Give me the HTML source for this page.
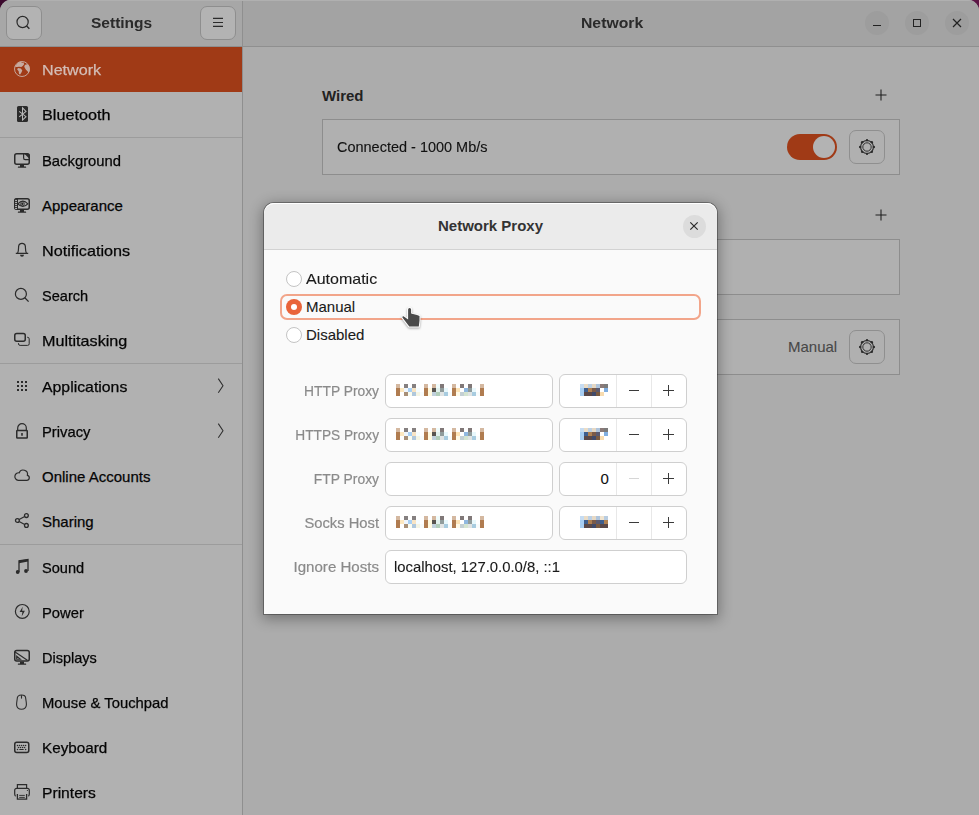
<!DOCTYPE html>
<html><head><meta charset="utf-8">
<style>
*{box-sizing:border-box;margin:0;padding:0}
html,body{width:979px;height:815px;overflow:hidden;background:linear-gradient(90deg,#3c0a2e,#5c1646)}
body{font-family:"Liberation Sans",sans-serif;font-size:15px;color:#111;position:relative}
.abs{position:absolute}
.ic{position:absolute;overflow:visible}
#win{position:absolute;left:0;top:0;width:979px;height:815px;border-radius:11px 11px 0 0;overflow:hidden;background:#ababab}
#hdrL{left:0;top:0;width:242px;height:46px;background:#a7a7a7}
#hdrR{left:243px;top:0;width:736px;height:46px;background:#a3a3a3}
#hline{left:0;top:46px;width:979px;height:1px;background:#8f8f8f}
#vline{left:242px;top:0;width:1px;height:815px;background:#8f8f8f}
#side{left:0;top:47px;width:242px;height:768px;background:#b1b1b1}
.hbtn{position:absolute;width:36px;height:34px;border-radius:7px;background:#b3b3b3;border:1px solid #8e8e8e}
.title{position:absolute;font-weight:700;font-size:15px;color:#2a2a2a;white-space:nowrap}
.item{position:absolute;left:0;width:242px;height:45px}
.item .t{position:absolute;left:42px;top:14px;white-space:nowrap;font-size:15px;color:#050505;-webkit-text-stroke:0.25px currentColor;transform-origin:0 50%}
.sep{position:absolute;left:0;width:242px;height:1px;background:#9c9c9c}
.wc{position:absolute;width:24px;height:24px;border-radius:50%;background:#9d9d9d}
#content{left:243px;top:47px;width:736px;height:768px;background:#acacac}
.box{position:absolute;border:1px solid #8d8d8d;background:#b0b0b0}
.gear{position:absolute;width:36px;height:34px;border:1px solid #8f8f8f;border-radius:7px;background:#b0b0b0}
#dlg{left:264px;top:203px;width:453px;height:411px;border-radius:10px 10px 0 0;background:#fafafa;box-shadow:0 0 0 1px rgba(0,0,0,.3),0 3px 14px 2px rgba(0,0,0,.33)}
#dhdr{left:264px;top:203px;width:453px;height:47px;background:#ebebeb;border-bottom:1px solid #d2d2d2;border-radius:10px 10px 0 0;box-shadow:inset 0 1px #fff}
.radio{position:absolute;width:16px;height:16px;border-radius:50%;border:1px solid #c4c4c4;background:#fff}
.lbl{position:absolute;left:279px;width:100px;white-space:nowrap;color:#8a8a8a;-webkit-text-stroke:0.2px currentColor;font-size:15px;text-align:right;transform-origin:100% 50%}
.txt{white-space:nowrap;color:#1a1a1a;-webkit-text-stroke:0.12px currentColor}
.entry{position:absolute;height:34px;border:1px solid #cfcfcf;border-radius:6px;background:#fff}
.spin{position:absolute;height:34px;border:1px solid #cfcfcf;border-radius:6px;background:#fff}
.pix i{position:absolute;width:4px;height:4px;display:block}
</style></head><body>
<div id="win">
  <div class="abs" id="hdrL"></div>
  <div class="abs" id="hdrR"></div>
  <div class="abs" id="side"></div>
  <div class="abs" id="content"></div>
  <div class="abs" id="hline"></div>
  <div class="abs" id="vline"></div>
  <div class="abs" style="left:0;top:0;width:979px;height:1px;background:#b0b0b0"></div>

  <!-- header left -->
  <div class="hbtn" style="left:6px;top:6px"></div>
  <svg class="ic" style="left:15px;top:15px" width="16" height="16" viewBox="0 0 16 16"><circle cx="7.6" cy="7" r="5.6" fill="none" stroke="#2b2b2b" stroke-width="1.2"/><path d="M11.6 11 L14.4 13.8" stroke="#2b2b2b" stroke-width="1.4"/></svg>
  <div class="title" style="left:91px;top:14px;transform:scaleX(1.034);transform-origin:0 50%">Settings</div>
  <div class="hbtn" style="left:200px;top:6px"></div>
  <svg class="ic" style="left:210px;top:14px" width="16" height="16" viewBox="0 0 16 16"><path d="M3 4.4 H13 M3 8.5 H13 M3 12.4 H13" stroke="#2b2b2b" stroke-width="1.2"/></svg>
  <div class="title" style="left:581px;top:14px;transform:scaleX(1.05);transform-origin:0 50%">Network</div>
  <div class="wc" style="left:865px;top:11px"></div>
  <div class="wc" style="left:905px;top:11px"></div>
  <div class="wc" style="left:945px;top:11px"></div>
  <div class="abs" style="left:873px;top:25px;width:8px;height:1.2px;background:#222"></div>
  <div class="abs" style="left:913px;top:19px;width:8px;height:8px;border:1.2px solid #222"></div>
  <svg class="ic" style="left:953px;top:19px" width="8" height="8" viewBox="0 0 8 8"><path d="M0 0 L8 8 M8 0 L0 8" stroke="#222" stroke-width="1.2"/></svg>

  <!-- sidebar -->
<div class="item" style="top:47px;background:#a03a16;"><svg class="ic" style="left:14px;top:14px" width="16" height="16" viewBox="0 0 16 16" ><circle cx="8" cy="8" r="7.5" fill="none" stroke="#c7aa9f" stroke-width="0.95"/><path d="M1 6.1 L3.2 2.5 L6.5 0.6 L8 1.7 L9.5 1.4 L10.2 3.2 L8.7 5 L7.3 6.1 L5 5.8 L3.2 6.1 Z" fill="#c7aa9f"/><path d="M3.9 6.9 L6.9 7.6 L8.3 9.5 L7.3 11.7 L6.1 13.5 L5 13.1 L4.7 10.2 L3.2 8.4 Z" fill="#c7aa9f"/><path d="M10.2 5 L11.7 3.6 L13.5 3.2 L15.3 5.8 L15.7 9.5 L14.6 11.7 L13.5 10.2 L12 8.7 L10.6 6.5 Z" fill="#c7aa9f"/></svg><span class="t" style="color:#d3bdb6;transform:scaleX(1.074)">Network</span></div>
<div class="item" style="top:92px;"><svg class="ic" style="left:14px;top:14px" width="16" height="16" viewBox="0 0 16 16" ><rect x="3" y="0" width="11" height="16" rx="1.6" fill="#2b2b2b"/><path d="M5.2 5.3 L12 10.7 L8.5 14.1 V1.9 L12 5.5 L5.2 10.8" fill="none" stroke="#b8b8b8" stroke-width="1.05" stroke-linejoin="miter"/></svg><span class="t" style="transform:scaleX(1.08)">Bluetooth</span></div>
<div class="item" style="top:138px;"><svg class="ic" style="left:14px;top:14px" width="16" height="16" viewBox="0 0 16 16" ><rect x="0.75" y="1.75" width="14.5" height="10.5" rx="2" fill="none" stroke="#2b2b2b" stroke-width="1.5"/><path d="M9.6 1.8 V6 A1.6 1.6 0 0 0 11.2 7.6 H15.2" fill="none" stroke="#2b2b2b" stroke-width="1.2"/><path d="M10.2 1.4 H13.6 A2 2 0 0 1 15.6 3.4 V7 Z" fill="#2b2b2b"/><rect x="6" y="12.5" width="4" height="2.5" fill="#2b2b2b"/><rect x="3.8" y="14.6" width="8.4" height="1.2" rx="0.6" fill="#2b2b2b"/></svg><span class="t" style="transform:scaleX(0.987)">Background</span></div>
<div class="item" style="top:183px;"><svg class="ic" style="left:14px;top:14px" width="16" height="16" viewBox="0 0 16 16" ><rect x="0.75" y="1.75" width="14.5" height="10.5" rx="2" fill="none" stroke="#2b2b2b" stroke-width="1.5"/><rect x="0.5" y="1.5" width="3.5" height="11" rx="1" fill="#2b2b2b"/><rect x="1.1" y="2.9" width="1.9" height="1.15" fill="#b3b3b3"/><rect x="1.1" y="4.9" width="1.9" height="1.15" fill="#b3b3b3"/><rect x="1.1" y="6.9" width="1.9" height="1.15" fill="#b3b3b3"/><rect x="1.1" y="8.9" width="1.9" height="1.15" fill="#b3b3b3"/><rect x="1.1" y="10.9" width="1.9" height="1.15" fill="#b3b3b3"/><path d="M3.9 6.8 Q8.8 1.6 13.8 6.8 Q8.8 12 3.9 6.8 Z" fill="none" stroke="#2b2b2b" stroke-width="1.2"/><circle cx="8.4" cy="6.8" r="2.1" fill="none" stroke="#2b2b2b" stroke-width="0.7"/><circle cx="8.4" cy="6.8" r="1.2" fill="#2b2b2b"/><rect x="6" y="12.5" width="4" height="2.5" fill="#2b2b2b"/><rect x="3.8" y="14.6" width="8.4" height="1.2" rx="0.6" fill="#2b2b2b"/></svg><span class="t" style="transform:scaleX(1.0)">Appearance</span></div>
<div class="item" style="top:228px;"><svg class="ic" style="left:14px;top:14px" width="16" height="16" viewBox="0 0 16 16" ><path d="M3.6 11.2 C4.6 9.6 4.5 7 4.6 4.6 C4.8 2.4 6.2 1.4 8 1.4 C9.8 1.4 11.2 2.4 11.4 4.6 C11.5 7 11.4 9.6 12.4 11.2" fill="none" stroke="#2b2b2b" stroke-width="1.2"/><path d="M1.8 11.4 H14.2" fill="none" stroke="#2b2b2b" stroke-width="1.4"/><path d="M6 12.8 H10 A2 2 0 0 1 6 12.8 Z" fill="#2b2b2b"/></svg><span class="t" style="transform:scaleX(1.078)">Notifications</span></div>
<div class="item" style="top:273px;"><svg class="ic" style="left:14px;top:14px" width="16" height="16" viewBox="0 0 16 16" ><circle cx="6.9" cy="6.9" r="5.5" fill="none" stroke="#2b2b2b" stroke-width="1.2"/><path d="M10.8 10.8 L14.6 14.6" fill="none" stroke="#2b2b2b" stroke-width="1.3"/></svg><span class="t" style="transform:scaleX(0.97)">Search</span></div>
<div class="item" style="top:318px;"><svg class="ic" style="left:14px;top:14px" width="16" height="16" viewBox="0 0 16 16" ><rect x="0.75" y="1.5" width="10.5" height="7.8" rx="2" fill="none" stroke="#2b2b2b" stroke-width="1.5"/><path d="M13 5.3 H13.6 A1.6 1.6 0 0 1 15.2 6.9 V11.8 A1.6 1.6 0 0 1 13.6 13.4 H6.1 A1.6 1.6 0 0 1 4.5 11.8 V11" fill="none" stroke="#2b2b2b" stroke-width="1"/></svg><span class="t" style="transform:scaleX(1.077)">Multitasking</span></div>
<div class="item" style="top:364px;"><svg class="ic" style="left:14px;top:14px" width="16" height="16" viewBox="0 0 16 16" ><rect x="3" y="3" width="2" height="2" fill="#2b2b2b"/><rect x="3" y="7" width="2" height="2" fill="#2b2b2b"/><rect x="3" y="11" width="2" height="2" fill="#2b2b2b"/><rect x="7" y="3" width="2" height="2" fill="#2b2b2b"/><rect x="7" y="7" width="2" height="2" fill="#2b2b2b"/><rect x="7" y="11" width="2" height="2" fill="#2b2b2b"/><rect x="11" y="3" width="2" height="2" fill="#2b2b2b"/><rect x="11" y="7" width="2" height="2" fill="#2b2b2b"/><rect x="11" y="11" width="2" height="2" fill="#2b2b2b"/></svg><span class="t" style="transform:scaleX(1.055)">Applications</span><svg class="ic" style="left:214px;top:14px" width="12" height="16" viewBox="0 0 12 16"><path d="M4.3 0.6 L9 7.7 L4.3 14.8" fill="none" stroke="#2e2e2e" stroke-width="1.05"/></svg></div>
<div class="item" style="top:409px;"><svg class="ic" style="left:14px;top:14px" width="16" height="16" viewBox="0 0 16 16" ><path d="M3.7 7.2 V5 A4.3 4.3 0 0 1 12.3 5 V7.2" fill="none" stroke="#2b2b2b" stroke-width="1.2"/><rect x="2.75" y="7.6" width="10.5" height="7.4" rx="0.6" fill="none" stroke="#2b2b2b" stroke-width="1.5"/><rect x="7.2" y="10" width="1.6" height="2.8" rx="0.5" fill="#2b2b2b"/></svg><span class="t" style="transform:scaleX(0.986)">Privacy</span><svg class="ic" style="left:214px;top:14px" width="12" height="16" viewBox="0 0 12 16"><path d="M4.3 0.6 L9 7.7 L4.3 14.8" fill="none" stroke="#2e2e2e" stroke-width="1.05"/></svg></div>
<div class="item" style="top:454px;"><svg class="ic" style="left:14px;top:14px" width="16" height="16" viewBox="0 0 16 16" ><path d="M4.2 12.4 H12.6 A2.6 2.6 0 0 0 13.4 7.3 A4.3 4.3 0 0 0 5.2 4.8 A3.7 3.7 0 0 0 4.2 12.4 Z" fill="none" stroke="#2b2b2b" stroke-width="1.2"/></svg><span class="t" style="transform:scaleX(1.0)">Online Accounts</span></div>
<div class="item" style="top:499px;"><svg class="ic" style="left:14px;top:14px" width="16" height="16" viewBox="0 0 16 16" ><circle cx="3.4" cy="7.5" r="1.9" fill="none" stroke="#2b2b2b" stroke-width="1.3"/><circle cx="12.4" cy="2.6" r="1.9" fill="none" stroke="#2b2b2b" stroke-width="1.3"/><circle cx="12.4" cy="12.4" r="1.9" fill="none" stroke="#2b2b2b" stroke-width="1.3"/><path d="M5.1 6.5 L10.7 3.5 M5.1 8.5 L10.7 11.5" fill="none" stroke="#2b2b2b" stroke-width="1.2"/></svg><span class="t" style="transform:scaleX(1.0)">Sharing</span></div>
<div class="item" style="top:545px;"><svg class="ic" style="left:14px;top:14px" width="16" height="16" viewBox="0 0 16 16" ><path d="M5 13 V1.8 L14 0.4 V12" fill="none" stroke="#2b2b2b" stroke-width="1.3"/><path d="M5 1.6 L14 0.2 V2.6 L5 4.2 Z" fill="#2b2b2b"/><circle cx="3.7" cy="13" r="1.9" fill="#2b2b2b"/><circle cx="12" cy="12" r="1.9" fill="#2b2b2b"/></svg><span class="t" style="transform:scaleX(0.974)">Sound</span></div>
<div class="item" style="top:590px;"><svg class="ic" style="left:14px;top:14px" width="16" height="16" viewBox="0 0 16 16" ><circle cx="8.3" cy="7.4" r="6.9" fill="none" stroke="#2b2b2b" stroke-width="1.2"/><path d="M8.7 2.8 L5.6 8 H8.4 L7.7 12.4 L10.9 6.8 H8.1 Z" fill="#2b2b2b"/></svg><span class="t" style="transform:scaleX(0.986)">Power</span></div>
<div class="item" style="top:635px;"><svg class="ic" style="left:14px;top:14px" width="16" height="16" viewBox="0 0 16 16" ><rect x="0.75" y="1.5" width="14.5" height="10.6" rx="2" fill="none" stroke="#2b2b2b" stroke-width="1.5"/><path d="M0.7 2.8 L13.4 11.2" fill="none" stroke="#2b2b2b" stroke-width="1.1"/><path d="M2.7 7.2 V10.3 H6.4 Z" fill="none" stroke="#2b2b2b" stroke-width="1.1"/><rect x="6" y="12.5" width="4" height="2.5" fill="#2b2b2b"/><rect x="3.8" y="14.6" width="8.4" height="1.2" rx="0.6" fill="#2b2b2b"/></svg><span class="t" style="transform:scaleX(0.968)">Displays</span></div>
<div class="item" style="top:680px;"><svg class="ic" style="left:14px;top:14px" width="16" height="16" viewBox="0 0 16 16" ><path d="M7.5 1 C5 1 3.2 1.6 3.2 5 C3 7 2.4 9 2.6 11 C2.9 14 5 15.2 7.5 15.2 C10 15.2 12.1 14 12.4 11 C12.6 9 12 7 11.8 5 C11.8 1.6 10 1 7.5 1 Z" fill="none" stroke="#2b2b2b" stroke-width="1.1"/><path d="M7.5 1.2 V4.6" fill="none" stroke="#2b2b2b" stroke-width="1.1"/></svg><span class="t" style="transform:scaleX(0.987)">Mouse &amp; Touchpad</span></div>
<div class="item" style="top:725px;"><svg class="ic" style="left:14px;top:14px" width="16" height="16" viewBox="0 0 16 16" ><rect x="0.75" y="3.2" width="14" height="10.2" rx="2" fill="none" stroke="#2b2b2b" stroke-width="1.5"/><circle cx="3.5" cy="6.5" r="0.75" fill="#2b2b2b"/><circle cx="5.52" cy="6.5" r="0.75" fill="#2b2b2b"/><circle cx="7.54" cy="6.5" r="0.75" fill="#2b2b2b"/><circle cx="9.56" cy="6.5" r="0.75" fill="#2b2b2b"/><circle cx="11.58" cy="6.5" r="0.75" fill="#2b2b2b"/><circle cx="4.5" cy="8.5" r="0.75" fill="#2b2b2b"/><circle cx="6.52" cy="8.5" r="0.75" fill="#2b2b2b"/><circle cx="8.54" cy="8.5" r="0.75" fill="#2b2b2b"/><circle cx="10.56" cy="8.5" r="0.75" fill="#2b2b2b"/><circle cx="3.5" cy="10.5" r="0.75" fill="#2b2b2b"/><circle cx="11.6" cy="10.5" r="0.75" fill="#2b2b2b"/><rect x="5.2" y="9.9" width="4.6" height="1.2" rx="0.5" fill="#2b2b2b"/></svg><span class="t" style="transform:scaleX(1.016)">Keyboard</span></div>
<div class="item" style="top:770px;"><svg class="ic" style="left:14px;top:14px" width="16" height="16" viewBox="0 0 16 16" ><path d="M3.4 4.3 V0.6 H12.6 V4.3" fill="none" stroke="#2b2b2b" stroke-width="1.2"/><path d="M1.6 12.2 C0.8 11.6 0.7 10.8 0.7 10 V6.3 A2 2 0 0 1 2.7 4.3 H13.3 A2 2 0 0 1 15.3 6.3 V10 C15.3 10.8 15.2 11.6 14.4 12.2" fill="none" stroke="#2b2b2b" stroke-width="1.2"/><path d="M3.4 10 V15.2 H12.6 V10" fill="none" stroke="#2b2b2b" stroke-width="1.3"/><path d="M5.2 11.4 H10.8 M5.2 13.4 H10.8" fill="none" stroke="#2b2b2b" stroke-width="0.9"/><circle cx="13.4" cy="6.5" r="0.6" fill="#2b2b2b"/></svg><span class="t" style="transform:scaleX(1.043)">Printers</span></div>
<div class="sep" style="top:137px"></div>
<div class="sep" style="top:363px"></div>
<div class="sep" style="top:544px"></div>

  <!-- content -->
  <div class="title" style="left:322px;top:87px;color:#222">Wired</div>
  <svg class="ic" style="left:875px;top:89px" width="12" height="12" viewBox="0 0 12 12"><path d="M6 0.5 V11.5 M0.5 6 H11.5" stroke="#1e1e1e" stroke-width="1.05"/></svg>
  <div class="box" style="left:322px;top:119px;width:578px;height:56px"></div>
  <div class="abs txt" style="left:337px;top:138px;color:#111;transform:scaleX(0.965);transform-origin:0 50%">Connected - 1000 Mb/s</div>
  <div class="abs" style="left:787px;top:134px;width:50px;height:26px;border-radius:13px;background:#a03a16"></div>
  <div class="abs" style="left:813px;top:136px;width:22px;height:22px;border-radius:50%;background:#b3b3b3"></div>
  <div class="gear" style="left:849px;top:130px"></div>
  <svg class="ic" style="left:859px;top:139px" width="16" height="16" viewBox="0 0 16 16"><circle cx="8.00" cy="1.15" r="1.2" fill="#2b2b2b"/><circle cx="12.84" cy="3.16" r="1.2" fill="#2b2b2b"/><circle cx="14.85" cy="8.00" r="1.2" fill="#2b2b2b"/><circle cx="12.84" cy="12.84" r="1.2" fill="#2b2b2b"/><circle cx="8.00" cy="14.85" r="1.2" fill="#2b2b2b"/><circle cx="3.16" cy="12.84" r="1.2" fill="#2b2b2b"/><circle cx="1.15" cy="8.00" r="1.2" fill="#2b2b2b"/><circle cx="3.16" cy="3.16" r="1.2" fill="#2b2b2b"/><circle cx="8" cy="8" r="6.45" fill="none" stroke="#2b2b2b" stroke-width="1.1"/><circle cx="8" cy="8" r="4.2" fill="none" stroke="#2b2b2b" stroke-width="0.95"/></svg>
  <svg class="ic" style="left:875px;top:209px" width="12" height="12" viewBox="0 0 12 12"><path d="M6 0.5 V11.5 M0.5 6 H11.5" stroke="#1e1e1e" stroke-width="1.05"/></svg>
  <div class="box" style="left:322px;top:239px;width:578px;height:56px"></div>
  <div class="box" style="left:322px;top:319px;width:578px;height:56px"></div>
  <div class="abs txt" style="left:788px;top:338px;color:#484848">Manual</div>
  <div class="gear" style="left:849px;top:330px"></div>
  <svg class="ic" style="left:859px;top:339px" width="16" height="16" viewBox="0 0 16 16"><circle cx="8.00" cy="1.15" r="1.2" fill="#2b2b2b"/><circle cx="12.84" cy="3.16" r="1.2" fill="#2b2b2b"/><circle cx="14.85" cy="8.00" r="1.2" fill="#2b2b2b"/><circle cx="12.84" cy="12.84" r="1.2" fill="#2b2b2b"/><circle cx="8.00" cy="14.85" r="1.2" fill="#2b2b2b"/><circle cx="3.16" cy="12.84" r="1.2" fill="#2b2b2b"/><circle cx="1.15" cy="8.00" r="1.2" fill="#2b2b2b"/><circle cx="3.16" cy="3.16" r="1.2" fill="#2b2b2b"/><circle cx="8" cy="8" r="6.45" fill="none" stroke="#2b2b2b" stroke-width="1.1"/><circle cx="8" cy="8" r="4.2" fill="none" stroke="#2b2b2b" stroke-width="0.95"/></svg>
</div>

<!-- dialog -->
<div class="abs" id="dlg"></div>
<div class="abs" id="dhdr"></div>
<div class="title" style="left:438px;top:217px;color:#333">Network Proxy</div>
<div class="abs" style="left:682.5px;top:214.5px;width:23px;height:23px;border-radius:50%;background:#dcdcdc"></div>
<svg class="ic" style="left:690px;top:222px" width="8" height="8" viewBox="0 0 8 8"><path d="M0.3 0.3 L7.7 7.7 M7.7 0.3 L0.3 7.7" stroke="#2a2a2a" stroke-width="1.2"/></svg>

<div class="radio" style="left:286px;top:271px"></div>
<div class="abs txt" style="left:306px;top:270px;transform:scaleX(1.067);transform-origin:0 50%">Automatic</div>
<div class="abs" style="left:280px;top:294px;width:421px;height:26px;border:2px solid #f2a58a;border-radius:7px"></div>
<div class="abs" style="left:286px;top:299px;width:16px;height:16px;border-radius:50%;background:#e9643a"></div>
<div class="abs" style="left:291px;top:304px;width:6px;height:6px;border-radius:50%;background:#fff"></div>
<div class="abs txt" style="left:306px;top:298px">Manual</div>
<div class="radio" style="left:286px;top:327px"></div>
<div class="abs txt" style="left:306px;top:326px">Disabled</div>

<div class="lbl" style="top:382px;transform:scaleX(0.921)">HTTP Proxy</div>
<div class="entry" style="left:385px;top:374px;width:168px"></div>
<div class="pix"><i style="left:396px;top:384px;background:#d4b8a0"></i><i style="left:404px;top:384px;background:#858080"></i><i style="left:412px;top:384px;background:#858080"></i><i style="left:424px;top:384px;background:#d4b8a0"></i><i style="left:432px;top:384px;background:#d4b8a0"></i><i style="left:436px;top:384px;background:#f0fcfc"></i><i style="left:440px;top:384px;background:#807878"></i><i style="left:452px;top:384px;background:#d4b8a0"></i><i style="left:460px;top:384px;background:#807878"></i><i style="left:468px;top:384px;background:#807878"></i><i style="left:480px;top:384px;background:#d4b8a0"></i><i style="left:396px;top:388px;background:#b07c50"></i><i style="left:400px;top:388px;background:#fde8c0"></i><i style="left:404px;top:388px;background:#f0f6fc"></i><i style="left:408px;top:388px;background:#a8d0f4"></i><i style="left:412px;top:388px;background:#f8e4c4"></i><i style="left:416px;top:388px;background:#f4fcff"></i><i style="left:424px;top:388px;background:#b07c50"></i><i style="left:428px;top:388px;background:#fffae0"></i><i style="left:432px;top:388px;background:#585450"></i><i style="left:436px;top:388px;background:#e2f2ee"></i><i style="left:440px;top:388px;background:#909c9c"></i><i style="left:444px;top:388px;background:#e8f8fc"></i><i style="left:452px;top:388px;background:#b07c50"></i><i style="left:456px;top:388px;background:#fde4b8"></i><i style="left:464px;top:388px;background:#90b8e0"></i><i style="left:468px;top:388px;background:#909c9c"></i><i style="left:472px;top:388px;background:#e8f8fc"></i><i style="left:480px;top:388px;background:#b07c50"></i><i style="left:396px;top:392px;background:#b07c50"></i><i style="left:404px;top:392px;background:#a89078"></i><i style="left:408px;top:392px;background:#fafcf0"></i><i style="left:412px;top:392px;background:#b0c8dc"></i><i style="left:416px;top:392px;background:#f4f4e4"></i><i style="left:420px;top:392px;background:#f8fcfc"></i><i style="left:424px;top:392px;background:#b07c50"></i><i style="left:428px;top:392px;background:#fffae0"></i><i style="left:432px;top:392px;background:#c0d0dc"></i><i style="left:436px;top:392px;background:#b2ceba"></i><i style="left:440px;top:392px;background:#e0e4e4"></i><i style="left:444px;top:392px;background:#a8cce0"></i><i style="left:448px;top:392px;background:#f8fcfc"></i><i style="left:452px;top:392px;background:#b07c50"></i><i style="left:456px;top:392px;background:#fffae8"></i><i style="left:460px;top:392px;background:#c4d0d4"></i><i style="left:464px;top:392px;background:#d4e4d0"></i><i style="left:468px;top:392px;background:#e0e4e4"></i><i style="left:472px;top:392px;background:#a8cce0"></i><i style="left:476px;top:392px;background:#f8fcfc"></i><i style="left:480px;top:392px;background:#b07c50"></i></div>
<div class="spin" style="left:559px;top:374px;width:128px"></div>
<div class="abs" style="left:616px;top:375px;width:1px;height:32px;background:#e8e8e8"></div>
<div class="abs" style="left:651px;top:375px;width:1px;height:32px;background:#e8e8e8"></div>
<div class="abs" style="left:629px;top:390px;width:10px;height:1.2px;background:#3a3a3a"></div>
<div class="abs" style="left:663px;top:390px;width:11px;height:1.2px;background:#3a3a3a"></div>
<div class="abs" style="left:668px;top:384.5px;width:1.2px;height:11px;background:#3a3a3a"></div>
<div class="pix"><i style="left:580px;top:384px;background:#c6dcf2"></i><i style="left:584px;top:384px;background:#eadcc6"></i><i style="left:588px;top:384px;background:#bcd0e4"></i><i style="left:592px;top:384px;background:#e6d8c4"></i><i style="left:596px;top:384px;background:#aec4dc"></i><i style="left:600px;top:384px;background:#8a7a78"></i><i style="left:604px;top:384px;background:#7a7a7a"></i><i style="left:580px;top:388px;background:#a8cef2"></i><i style="left:584px;top:388px;background:#3e5e8e"></i><i style="left:588px;top:388px;background:#b08050"></i><i style="left:592px;top:388px;background:#7a5a48"></i><i style="left:596px;top:388px;background:#5a5a70"></i><i style="left:604px;top:388px;background:#80aee0"></i><i style="left:580px;top:392px;background:#a8cef2"></i><i style="left:584px;top:392px;background:#5a4848"></i><i style="left:588px;top:392px;background:#5a4848"></i><i style="left:592px;top:392px;background:#404a6a"></i><i style="left:596px;top:392px;background:#7a5a40"></i><i style="left:600px;top:392px;background:#f8dcb0"></i></div>
<div class="lbl" style="top:426px;transform:scaleX(0.913)">HTTPS Proxy</div>
<div class="entry" style="left:385px;top:418px;width:168px"></div>
<div class="pix"><i style="left:396px;top:428px;background:#d4b8a0"></i><i style="left:404px;top:428px;background:#858080"></i><i style="left:412px;top:428px;background:#858080"></i><i style="left:424px;top:428px;background:#d4b8a0"></i><i style="left:432px;top:428px;background:#d4b8a0"></i><i style="left:436px;top:428px;background:#f0fcfc"></i><i style="left:440px;top:428px;background:#807878"></i><i style="left:452px;top:428px;background:#d4b8a0"></i><i style="left:460px;top:428px;background:#807878"></i><i style="left:468px;top:428px;background:#807878"></i><i style="left:480px;top:428px;background:#d4b8a0"></i><i style="left:396px;top:432px;background:#b07c50"></i><i style="left:400px;top:432px;background:#fde8c0"></i><i style="left:404px;top:432px;background:#f0f6fc"></i><i style="left:408px;top:432px;background:#a8d0f4"></i><i style="left:412px;top:432px;background:#f8e4c4"></i><i style="left:416px;top:432px;background:#f4fcff"></i><i style="left:424px;top:432px;background:#b07c50"></i><i style="left:428px;top:432px;background:#fffae0"></i><i style="left:432px;top:432px;background:#585450"></i><i style="left:436px;top:432px;background:#e2f2ee"></i><i style="left:440px;top:432px;background:#909c9c"></i><i style="left:444px;top:432px;background:#e8f8fc"></i><i style="left:452px;top:432px;background:#b07c50"></i><i style="left:456px;top:432px;background:#fde4b8"></i><i style="left:464px;top:432px;background:#90b8e0"></i><i style="left:468px;top:432px;background:#909c9c"></i><i style="left:472px;top:432px;background:#e8f8fc"></i><i style="left:480px;top:432px;background:#b07c50"></i><i style="left:396px;top:436px;background:#b07c50"></i><i style="left:404px;top:436px;background:#a89078"></i><i style="left:408px;top:436px;background:#fafcf0"></i><i style="left:412px;top:436px;background:#b0c8dc"></i><i style="left:416px;top:436px;background:#f4f4e4"></i><i style="left:420px;top:436px;background:#f8fcfc"></i><i style="left:424px;top:436px;background:#b07c50"></i><i style="left:428px;top:436px;background:#fffae0"></i><i style="left:432px;top:436px;background:#c0d0dc"></i><i style="left:436px;top:436px;background:#b2ceba"></i><i style="left:440px;top:436px;background:#e0e4e4"></i><i style="left:444px;top:436px;background:#a8cce0"></i><i style="left:448px;top:436px;background:#f8fcfc"></i><i style="left:452px;top:436px;background:#b07c50"></i><i style="left:456px;top:436px;background:#fffae8"></i><i style="left:460px;top:436px;background:#c4d0d4"></i><i style="left:464px;top:436px;background:#d4e4d0"></i><i style="left:468px;top:436px;background:#e0e4e4"></i><i style="left:472px;top:436px;background:#a8cce0"></i><i style="left:476px;top:436px;background:#f8fcfc"></i><i style="left:480px;top:436px;background:#b07c50"></i></div>
<div class="spin" style="left:559px;top:418px;width:128px"></div>
<div class="abs" style="left:616px;top:419px;width:1px;height:32px;background:#e8e8e8"></div>
<div class="abs" style="left:651px;top:419px;width:1px;height:32px;background:#e8e8e8"></div>
<div class="abs" style="left:629px;top:434px;width:10px;height:1.2px;background:#3a3a3a"></div>
<div class="abs" style="left:663px;top:434px;width:11px;height:1.2px;background:#3a3a3a"></div>
<div class="abs" style="left:668px;top:428.5px;width:1.2px;height:11px;background:#3a3a3a"></div>
<div class="pix"><i style="left:580px;top:428px;background:#c6dcf2"></i><i style="left:584px;top:428px;background:#eadcc6"></i><i style="left:588px;top:428px;background:#bcd0e4"></i><i style="left:592px;top:428px;background:#e6d8c4"></i><i style="left:596px;top:428px;background:#aec4dc"></i><i style="left:600px;top:428px;background:#8a7a78"></i><i style="left:604px;top:428px;background:#7a7a7a"></i><i style="left:580px;top:432px;background:#a8cef2"></i><i style="left:584px;top:432px;background:#3e5e8e"></i><i style="left:588px;top:432px;background:#b08050"></i><i style="left:592px;top:432px;background:#7a5a48"></i><i style="left:596px;top:432px;background:#5a5a70"></i><i style="left:604px;top:432px;background:#80aee0"></i><i style="left:580px;top:436px;background:#a8cef2"></i><i style="left:584px;top:436px;background:#5a4848"></i><i style="left:588px;top:436px;background:#5a4848"></i><i style="left:592px;top:436px;background:#404a6a"></i><i style="left:596px;top:436px;background:#7a5a40"></i><i style="left:600px;top:436px;background:#f8dcb0"></i></div>
<div class="lbl" style="top:470px;transform:scaleX(0.924)">FTP Proxy</div>
<div class="entry" style="left:385px;top:462px;width:168px"></div>
<div class="spin" style="left:559px;top:462px;width:128px"></div>
<div class="abs" style="left:616px;top:463px;width:1px;height:32px;background:#e8e8e8"></div>
<div class="abs" style="left:651px;top:463px;width:1px;height:32px;background:#e8e8e8"></div>
<div class="abs" style="left:629px;top:478px;width:10px;height:1.2px;background:#d6d6d6"></div>
<div class="abs" style="left:663px;top:478px;width:11px;height:1.2px;background:#3a3a3a"></div>
<div class="abs" style="left:668px;top:472.5px;width:1.2px;height:11px;background:#3a3a3a"></div>
<div class="abs txt" style="left:600.5px;top:470px;color:#111">0</div>
<div class="lbl" style="top:514px;transform:scaleX(0.983)">Socks Host</div>
<div class="entry" style="left:385px;top:506px;width:168px"></div>
<div class="pix"><i style="left:396px;top:516px;background:#d4b8a0"></i><i style="left:404px;top:516px;background:#858080"></i><i style="left:412px;top:516px;background:#858080"></i><i style="left:424px;top:516px;background:#d4b8a0"></i><i style="left:432px;top:516px;background:#d4b8a0"></i><i style="left:436px;top:516px;background:#f0fcfc"></i><i style="left:440px;top:516px;background:#807878"></i><i style="left:452px;top:516px;background:#d4b8a0"></i><i style="left:460px;top:516px;background:#807878"></i><i style="left:468px;top:516px;background:#807878"></i><i style="left:480px;top:516px;background:#d4b8a0"></i><i style="left:396px;top:520px;background:#b07c50"></i><i style="left:400px;top:520px;background:#fde8c0"></i><i style="left:404px;top:520px;background:#f0f6fc"></i><i style="left:408px;top:520px;background:#a8d0f4"></i><i style="left:412px;top:520px;background:#f8e4c4"></i><i style="left:416px;top:520px;background:#f4fcff"></i><i style="left:424px;top:520px;background:#b07c50"></i><i style="left:428px;top:520px;background:#fffae0"></i><i style="left:432px;top:520px;background:#585450"></i><i style="left:436px;top:520px;background:#e2f2ee"></i><i style="left:440px;top:520px;background:#909c9c"></i><i style="left:444px;top:520px;background:#e8f8fc"></i><i style="left:452px;top:520px;background:#b07c50"></i><i style="left:456px;top:520px;background:#fde4b8"></i><i style="left:464px;top:520px;background:#90b8e0"></i><i style="left:468px;top:520px;background:#909c9c"></i><i style="left:472px;top:520px;background:#e8f8fc"></i><i style="left:480px;top:520px;background:#b07c50"></i><i style="left:396px;top:524px;background:#b07c50"></i><i style="left:404px;top:524px;background:#a89078"></i><i style="left:408px;top:524px;background:#fafcf0"></i><i style="left:412px;top:524px;background:#b0c8dc"></i><i style="left:416px;top:524px;background:#f4f4e4"></i><i style="left:420px;top:524px;background:#f8fcfc"></i><i style="left:424px;top:524px;background:#b07c50"></i><i style="left:428px;top:524px;background:#fffae0"></i><i style="left:432px;top:524px;background:#c0d0dc"></i><i style="left:436px;top:524px;background:#b2ceba"></i><i style="left:440px;top:524px;background:#e0e4e4"></i><i style="left:444px;top:524px;background:#a8cce0"></i><i style="left:448px;top:524px;background:#f8fcfc"></i><i style="left:452px;top:524px;background:#b07c50"></i><i style="left:456px;top:524px;background:#fffae8"></i><i style="left:460px;top:524px;background:#c4d0d4"></i><i style="left:464px;top:524px;background:#d4e4d0"></i><i style="left:468px;top:524px;background:#e0e4e4"></i><i style="left:472px;top:524px;background:#a8cce0"></i><i style="left:476px;top:524px;background:#f8fcfc"></i><i style="left:480px;top:524px;background:#b07c50"></i></div>
<div class="spin" style="left:559px;top:506px;width:128px"></div>
<div class="abs" style="left:616px;top:507px;width:1px;height:32px;background:#e8e8e8"></div>
<div class="abs" style="left:651px;top:507px;width:1px;height:32px;background:#e8e8e8"></div>
<div class="abs" style="left:629px;top:522px;width:10px;height:1.2px;background:#3a3a3a"></div>
<div class="abs" style="left:663px;top:522px;width:11px;height:1.2px;background:#3a3a3a"></div>
<div class="abs" style="left:668px;top:516.5px;width:1.2px;height:11px;background:#3a3a3a"></div>
<div class="pix"><i style="left:580px;top:516px;background:#c6dcf2"></i><i style="left:584px;top:516px;background:#eadcc6"></i><i style="left:588px;top:516px;background:#bcd0e4"></i><i style="left:592px;top:516px;background:#e6d8c4"></i><i style="left:596px;top:516px;background:#aec4dc"></i><i style="left:600px;top:516px;background:#f0e4d0"></i><i style="left:604px;top:516px;background:#b8cce0"></i><i style="left:580px;top:520px;background:#a8cef2"></i><i style="left:584px;top:520px;background:#3e5e8e"></i><i style="left:588px;top:520px;background:#b08050"></i><i style="left:592px;top:520px;background:#7a5a48"></i><i style="left:596px;top:520px;background:#5a5a70"></i><i style="left:600px;top:520px;background:#3e5e8e"></i><i style="left:604px;top:520px;background:#b08050"></i><i style="left:580px;top:524px;background:#a8cef2"></i><i style="left:584px;top:524px;background:#5a4848"></i><i style="left:588px;top:524px;background:#5a4848"></i><i style="left:592px;top:524px;background:#404a6a"></i><i style="left:596px;top:524px;background:#7a5a40"></i><i style="left:600px;top:524px;background:#5a4848"></i><i style="left:604px;top:524px;background:#5a4848"></i></div>
<div class="lbl" style="top:558px;transform:scaleX(1.005)">Ignore Hosts</div>
<div class="entry" style="left:385px;top:550px;width:302px"></div>
<div class="abs txt" style="left:394px;top:558px;transform:scaleX(0.99);transform-origin:0 50%">localhost, 127.0.0.0/8, ::1</div>
<svg class="ic" style="left:400px;top:306px;filter:drop-shadow(0 1px 1.2px rgba(0,0,0,.35))" width="22" height="24" viewBox="0 0 22 24"><path d="M8.1 3.4 A1.5 1.5 0 0 1 11.1 3.4 V7.4 L13 8.1 L15 8.6 L17 9.1 L19.5 9.9 V14.5 L18.8 20.6 H9.3 L2.4 11.6 A1.1 1.1 0 0 1 3.5 10.3 L8.1 13.5 Z" fill="#4a4a4a" stroke="#fff" stroke-width="2" stroke-linejoin="round" paint-order="stroke"/></svg>
</body></html>
